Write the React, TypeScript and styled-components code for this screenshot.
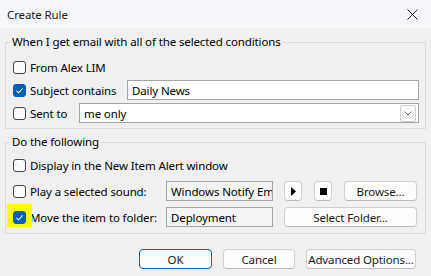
import * as React from "react";
import styled, { createGlobalStyle } from "styled-components";

const GlobalStyle = createGlobalStyle`
  html, body {
    margin: 0;
    padding: 0;
    background: #f0f0f0;
  }
`;

const Dialog = styled.div`
  width: 431px;
  height: 276px;
  background: #f0f0f0;
  font-family: "Noto Sans", "Open Sans", sans-serif;
  font-size: 11.5px;
  letter-spacing: -0.12px;
  color: #000;
  overflow: hidden;
`;

const TitleBar = styled.div`
  height: 28px;
  display: flex;
  align-items: center;
  justify-content: space-between;
  padding: 0 13px 0 7px;
  background: #f4f6f9;
`;

const Title = styled.span`
  color: #1a1a1a;
`;

const Group = styled.fieldset<{ $top: number; $bottom: number; $gap: number }>`
  margin: 6px 5px 0;
  padding: ${(p) => p.$top}px 6px ${(p) => p.$bottom}px 7px;
  border: 1px solid #dcdcdc;
  min-width: 0;
  display: flex;
  flex-direction: column;
  gap: ${(p) => p.$gap}px;
`;

const Legend = styled.legend`
  padding: 0 2px;
  margin-left: -3px;
  line-height: 16px;
`;

const Row = styled.div`
  position: relative;
  display: flex;
  align-items: center;
  height: 20px;
`;

const CheckLabel = styled.label<{ $w?: number }>`
  display: flex;
  align-items: center;
  gap: 4px;
  flex: none;
  width: ${(p) => (p.$w ? `${p.$w}px` : "auto")};
  white-space: nowrap;
`;

const Box = styled.span<{ $on?: boolean }>`
  position: relative;
  z-index: 2;
  box-sizing: border-box;
  width: 13px;
  height: 13px;
  border-radius: 3px;
  border: 1px solid ${(p) => (p.$on ? "#005fb8" : "#444")};
  background: ${(p) => (p.$on ? "#005fb8" : "#fbfbfb")};
  display: flex;
  align-items: center;
  justify-content: center;
`;

const TextBox = styled.div<{ $w?: number; $ro?: boolean }>`
  box-sizing: border-box;
  height: 20px;
  ${(p) => (p.$w ? `width: ${p.$w}px; flex: none;` : "flex: 1;")}
  border: 1px solid #a5a5a5;
  background: ${(p) => (p.$ro ? "#f4f4f4" : "#fff")};
  padding: 0 1px 0 4px;
  display: flex;
  align-items: center;
  white-space: nowrap;
  overflow: hidden;
`;

const DropButton = styled.span`
  box-sizing: border-box;
  margin-left: auto;
  margin-right: 1px;
  width: 16px;
  height: 17px;
  border: 1px solid #cfcfcf;
  border-radius: 2px;
  background: #fff;
  display: flex;
  align-items: center;
  justify-content: center;
`;

const Button = styled.button<{ $w: number; $default?: boolean }>`
  box-sizing: border-box;
  width: ${(p) => p.$w}px;
  height: 20px;
  flex: none;
  padding: 0;
  font: inherit;
  letter-spacing: inherit;
  white-space: nowrap;
  color: #1a1a1a;
  background: #fdfdfd;
  border: 1px solid ${(p) => (p.$default ? "#005fb8" : "#d0d0d0")};
  border-bottom-color: ${(p) => (p.$default ? "#005fb8" : "#bcbcbc")};
  border-radius: 4px;
  display: flex;
  align-items: center;
  justify-content: center;
`;

const Tools = styled.div`
  display: flex;
  gap: 12px;
  margin-left: 11px;
`;

const Highlight = styled.span`
  position: absolute;
  z-index: 1;
  left: -6px;
  top: -3px;
  width: 25px;
  height: 23px;
  background: #ffff00;
`;

const Footer = styled.div`
  display: flex;
  justify-content: flex-end;
  gap: 11px;
  padding: 15px 15px 0 0;
`;

const Check = ({ on }: { on?: boolean }) => (
  <Box $on={on}>
    {on && (
      <svg width="9" height="9" viewBox="0 0 9 9">
        <path d="M1.5 4.8 L3.6 6.8 L7.6 2.4" fill="none" stroke="#fff" strokeWidth="1.1" />
      </svg>
    )}
  </Box>
);

const App: React.FC = () => (
  <Dialog>
    <GlobalStyle />
    <TitleBar>
      <Title>Create Rule</Title>
      <svg width="11" height="11" viewBox="0 0 11 11">
        <path d="M0.5 0.5 L10.5 10.5 M10.5 0.5 L0.5 10.5" stroke="#222" strokeWidth="1" />
      </svg>
    </TitleBar>

    <Group $top={7} $bottom={5} $gap={3}>
      <Legend>When I get email with all of the selected conditions</Legend>
      <Row>
        <CheckLabel>
          <Check />
          From Alex LIM
        </CheckLabel>
      </Row>
      <Row>
        <CheckLabel $w={114}>
          <Check on />
          Subject contains
        </CheckLabel>
        <TextBox>Daily News</TextBox>
      </Row>
      <Row>
        <CheckLabel $w={66}>
          <Check />
          Sent to
        </CheckLabel>
        <TextBox>
          me only
          <DropButton>
            <svg width="8" height="5" viewBox="0 0 8 5">
              <path d="M0.5 0.5 L4 4 L7.5 0.5" fill="none" stroke="#555" strokeWidth="1" />
            </svg>
          </DropButton>
        </TextBox>
      </Row>
    </Group>

    <Group $top={5} $bottom={6} $gap={6} style={{ marginTop: 5 }}>
      <Legend>Do the following</Legend>
      <Row>
        <CheckLabel>
          <Check />
          Display in the New Item Alert window
        </CheckLabel>
      </Row>
      <Row>
        <CheckLabel $w={153}>
          <Check />
          Play a selected sound:
        </CheckLabel>
        <TextBox $w={107} $ro>
          Windows Notify Email
        </TextBox>
        <Tools>
          <Button $w={18}>
            <svg width="5" height="9" viewBox="0 0 5 9">
              <path d="M0 0 L5 4.5 L0 9 Z" fill="#000" />
            </svg>
          </Button>
          <Button $w={18}>
            <svg width="7" height="7" viewBox="0 0 7 7">
              <rect width="7" height="7" fill="#000" />
            </svg>
          </Button>
          <Button $w={73}>Browse...</Button>
        </Tools>
      </Row>
      <Row>
        <Highlight />
        <CheckLabel $w={153}>
          <Check on />
          Move the item to folder:
        </CheckLabel>
        <TextBox $w={107} $ro>
          Deployment
        </TextBox>
        <Tools>
          <Button $w={133}>Select Folder...</Button>
        </Tools>
      </Row>
    </Group>

    <Footer>
      <Button $w={73} $default>
        OK
      </Button>
      <Button $w={72}>Cancel</Button>
      <Button $w={110}>Advanced Options...</Button>
    </Footer>
  </Dialog>
);

export default App;
